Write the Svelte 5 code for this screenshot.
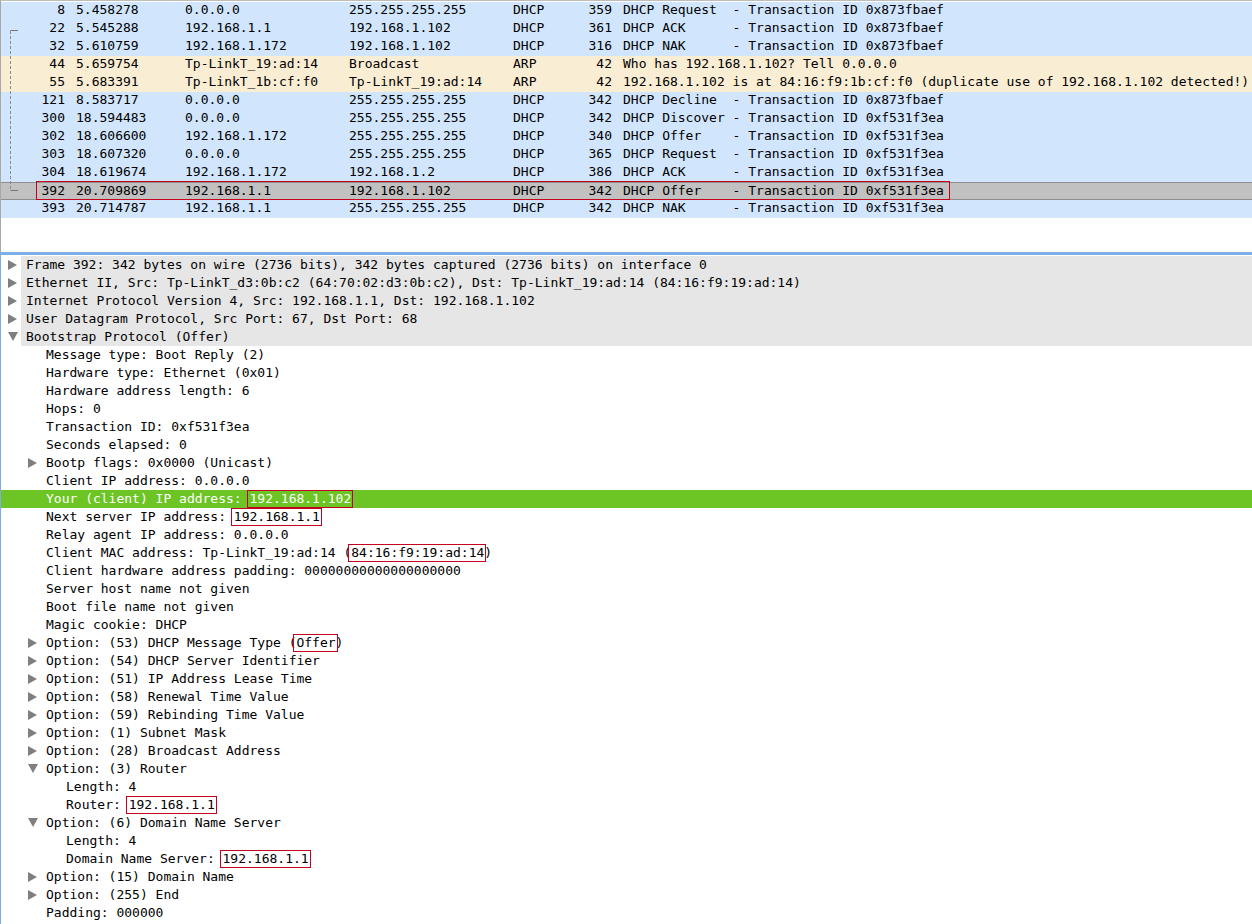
<script>
  const packets = [
    ['8','5.458278','0.0.0.0','255.255.255.255','DHCP','359','DHCP Request  - Transaction ID 0x873fbaef','udp'],
    ['22','5.545288','192.168.1.1','192.168.1.102','DHCP','361','DHCP ACK      - Transaction ID 0x873fbaef','udp'],
    ['32','5.610759','192.168.1.172','192.168.1.102','DHCP','316','DHCP NAK      - Transaction ID 0x873fbaef','udp'],
    ['44','5.659754','Tp-LinkT_19:ad:14','Broadcast','ARP','42','Who has 192.168.1.102? Tell 0.0.0.0','arp'],
    ['55','5.683391','Tp-LinkT_1b:cf:f0','Tp-LinkT_19:ad:14','ARP','42','192.168.1.102 is at 84:16:f9:1b:cf:f0 (duplicate use of 192.168.1.102 detected!)','arp'],
    ['121','8.583717','0.0.0.0','255.255.255.255','DHCP','342','DHCP Decline  - Transaction ID 0x873fbaef','udp'],
    ['300','18.594483','0.0.0.0','255.255.255.255','DHCP','342','DHCP Discover - Transaction ID 0xf531f3ea','udp'],
    ['302','18.606600','192.168.1.172','255.255.255.255','DHCP','340','DHCP Offer    - Transaction ID 0xf531f3ea','udp'],
    ['303','18.607320','0.0.0.0','255.255.255.255','DHCP','365','DHCP Request  - Transaction ID 0xf531f3ea','udp'],
    ['304','18.619674','192.168.1.172','192.168.1.2','DHCP','386','DHCP ACK      - Transaction ID 0xf531f3ea','udp'],
    ['392','20.709869','192.168.1.1','192.168.1.102','DHCP','342','DHCP Offer    - Transaction ID 0xf531f3ea','sel'],
    ['393','20.714787','192.168.1.1','255.255.255.255','DHCP','342','DHCP NAK      - Transaction ID 0xf531f3ea','udp']
  ];
  // [level, arrow, text, boxed, trailing, kind]
  const details = [
    [0,'r','Frame 392: 342 bytes on wire (2736 bits), 342 bytes captured (2736 bits) on interface 0'],
    [0,'r','Ethernet II, Src: Tp-LinkT_d3:0b:c2 (64:70:02:d3:0b:c2), Dst: Tp-LinkT_19:ad:14 (84:16:f9:19:ad:14)'],
    [0,'r','Internet Protocol Version 4, Src: 192.168.1.1, Dst: 192.168.1.102'],
    [0,'r','User Datagram Protocol, Src Port: 67, Dst Port: 68'],
    [0,'d','Bootstrap Protocol (Offer)'],
    [1,'','Message type: Boot Reply (2)'],
    [1,'','Hardware type: Ethernet (0x01)'],
    [1,'','Hardware address length: 6'],
    [1,'','Hops: 0'],
    [1,'','Transaction ID: 0xf531f3ea'],
    [1,'','Seconds elapsed: 0'],
    [1,'r','Bootp flags: 0x0000 (Unicast)'],
    [1,'','Client IP address: 0.0.0.0'],
    [1,'','Your (client) IP address: ','192.168.1.102','','hl'],
    [1,'','Next server IP address: ','192.168.1.1'],
    [1,'','Relay agent IP address: 0.0.0.0'],
    [1,'','Client MAC address: Tp-LinkT_19:ad:14 (','84:16:f9:19:ad:14',')'],
    [1,'','Client hardware address padding: 00000000000000000000'],
    [1,'','Server host name not given'],
    [1,'','Boot file name not given'],
    [1,'','Magic cookie: DHCP'],
    [1,'r','Option: (53) DHCP Message Type (','Offer',')'],
    [1,'r','Option: (54) DHCP Server Identifier'],
    [1,'r','Option: (51) IP Address Lease Time'],
    [1,'r','Option: (58) Renewal Time Value'],
    [1,'r','Option: (59) Rebinding Time Value'],
    [1,'r','Option: (1) Subnet Mask'],
    [1,'r','Option: (28) Broadcast Address'],
    [1,'d','Option: (3) Router'],
    [2,'','Length: 4'],
    [2,'','Router: ','192.168.1.1'],
    [1,'d','Option: (6) Domain Name Server'],
    [2,'','Length: 4'],
    [2,'','Domain Name Server: ','192.168.1.1'],
    [1,'r','Option: (15) Domain Name'],
    [1,'r','Option: (255) End'],
    [1,'','Padding: 000000']
  ];
</script>

<div class="app">
  <section class="list">
    <svg class="graph" width="20" height="200" aria-hidden="true">
      <path d="M9.5 30V190" stroke="#8a8a8a" stroke-dasharray="3 2" fill="none"/>
      <path d="M9.5 29.5H17M9.5 189.5H17" stroke="#777" fill="none"/>
    </svg>
    {#each packets as p}
      <div class="pkt {p[7]}">
        <span class="no">{p[0]}</span>
        <span>{p[1]}</span>
        <span>{p[2]}</span>
        <span>{p[3]}</span>
        <span>{p[4]}</span>
        <span class="len">{p[5]}</span>
        <span class="info">{p[6]}</span>
        {#if p[7] === 'sel'}<i class="pktbox"></i>{/if}
      </div>
    {/each}
  </section>
  <div class="divider"></div>
  <section class="details">
    {#each details as d}
      <div class="row l{d[0]} {d[5] ?? ''}">
        {#if d[1] === 'r'}
          <svg class="tri" width="9" height="10" aria-hidden="true"><path d="M0 0L9 5L0 10Z" fill="#7f7f7f"/></svg>
        {:else if d[1] === 'd'}
          <svg class="tri" width="10" height="9" aria-hidden="true"><path d="M0 0H10L5 9Z" fill="#7f7f7f"/></svg>
        {/if}
        <span class="txt">{d[2]}{#if d[3]}<span class="box">{d[3]}</span>{/if}{d[4] ?? ''}</span>
      </div>
    {/each}
  </section>
</div>

<style>
  :global(body) { margin: 0; background: #fff; overflow: hidden; }
  .app {
    width: 1252px;
    height: 924px;
    display: flex;
    flex-direction: column;
    font: 13px/18px "DejaVu Sans Mono", "Liberation Mono", monospace;
    color: #000;
    overflow: hidden;
  }
  .list {
    position: relative;
    height: 252px;
    box-sizing: border-box;
    border-top: 1px solid #bdbdbd;
    border-left: 1px solid #a8a8a8;
    padding-top: 1px;
    flex: none;
  }
  .graph { position: absolute; left: 0; top: 0; z-index: 2; }
  .pkt {
    position: relative;
    height: 18px;
    display: grid;
    grid-template-columns: 75px 109px 164px 164px 72px 27px 1fr;
    line-height: 16px;
    white-space: pre;
  }
  .pkt .no { text-align: right; padding-right: 11px; }
  .pkt .len { text-align: right; }
  .pkt .info { padding-left: 11px; }
  .udp { background: #d1e6fd; }
  .arp { background: #f9edd4; }
  .sel {
    background: #c1c1c1;
    box-shadow: inset 0 1px 0 #8f8f8f, inset 0 -1px 0 #8f8f8f;
    line-height: 18px;
  }
  .pktbox {
    position: absolute;
    left: 35px;
    width: 914px;
    top: -1px;
    height: 19px;
    border: 1px solid #c4001e;
    box-sizing: border-box;
  }
  .divider { height: 3px; background: #7fade6; flex: none; }
  .details {
    flex: 1;
    border-left: 1px solid #7fade6;
    padding-top: 1px;
  }
  .row { position: relative; height: 18px; }
  .txt { display: block; white-space: pre; }
  .l0 { margin-left: 20px; padding-left: 5px; background: #e6e6e6; }
  .l1 { padding-left: 45px; }
  .l2 { padding-left: 65px; }
  .tri { position: absolute; top: 4px; }
  .l0 .tri { left: -13px; }
  .l1 .tri { left: 27px; }
  .hl { background: #6cc524; color: #fff; }
  .box { position: relative; display: inline-block; }
  .box::after {
    content: "";
    position: absolute;
    left: -3px;
    right: -2px;
    top: 0;
    bottom: 0;
    border: 1px solid #c4001e;
  }
</style>
